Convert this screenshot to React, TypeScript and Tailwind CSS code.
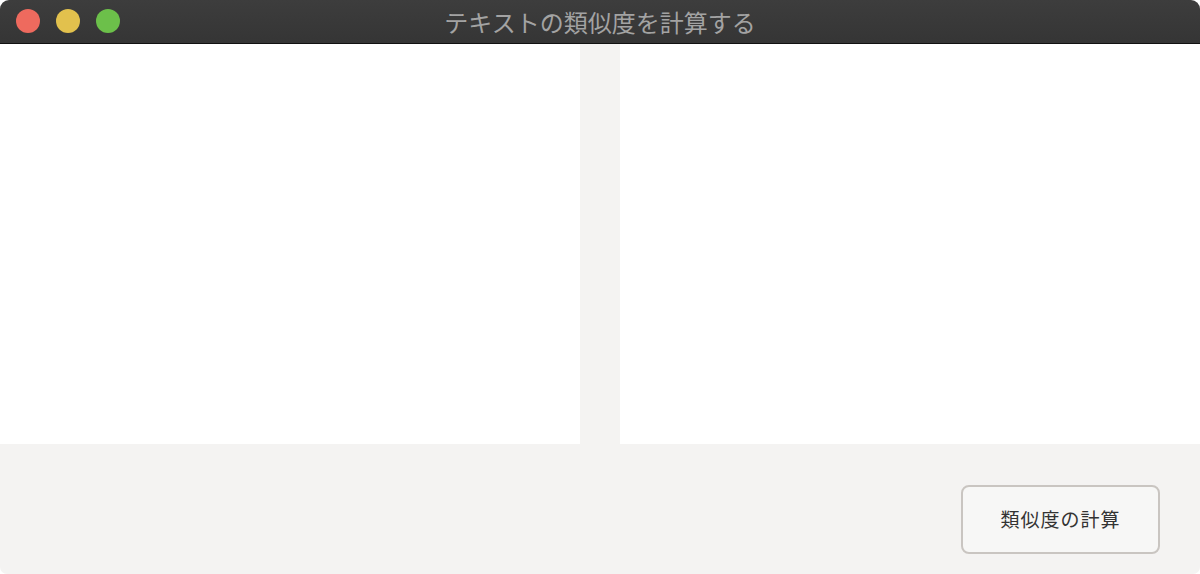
export default function App() {
  return (
    <div className="w-[1200px] h-[574px] bg-white">
      <div className="flex h-full flex-col overflow-hidden rounded-t-[9px] rounded-b-[7px] bg-[#f4f3f2]">
        {/* title bar */}
        <div className="relative flex h-[44px] shrink-0 items-center justify-center border-b border-[#111] bg-gradient-to-b from-[#3d3d3d] to-[#353535]">
          <div className="absolute left-[16px] top-[9px] flex gap-[16px]">
            <span className="h-[24px] w-[24px] rounded-full bg-[#ee6a5e]" />
            <span className="h-[24px] w-[24px] rounded-full bg-[#e2c14d]" />
            <span className="h-[24px] w-[24px] rounded-full bg-[#6cc04a]" />
          </div>
          <span className="font-['Noto_Sans_CJK_JP',sans-serif] text-[24px] leading-none text-[#a3a3a3]">
            テキストの類似度を計算する
          </span>
        </div>

        {/* text panes */}
        <div className="flex h-[400px] shrink-0 gap-[40px]">
          <textarea className="h-full w-[580px] resize-none bg-white outline-none" />
          <textarea className="h-full w-[580px] resize-none bg-white outline-none" />
        </div>

        {/* footer */}
        <div className="flex flex-1 items-start justify-end pr-[40px] pt-[41px]">
          <button className="h-[69px] w-[199px] rounded-[8px] border-2 border-[#c9c5c1] bg-[#f7f7f6] font-['Noto_Sans_CJK_JP',sans-serif] text-[19px] tracking-[1px] text-[#333]">
            類似度の計算
          </button>
        </div>
      </div>
    </div>
  );
}
